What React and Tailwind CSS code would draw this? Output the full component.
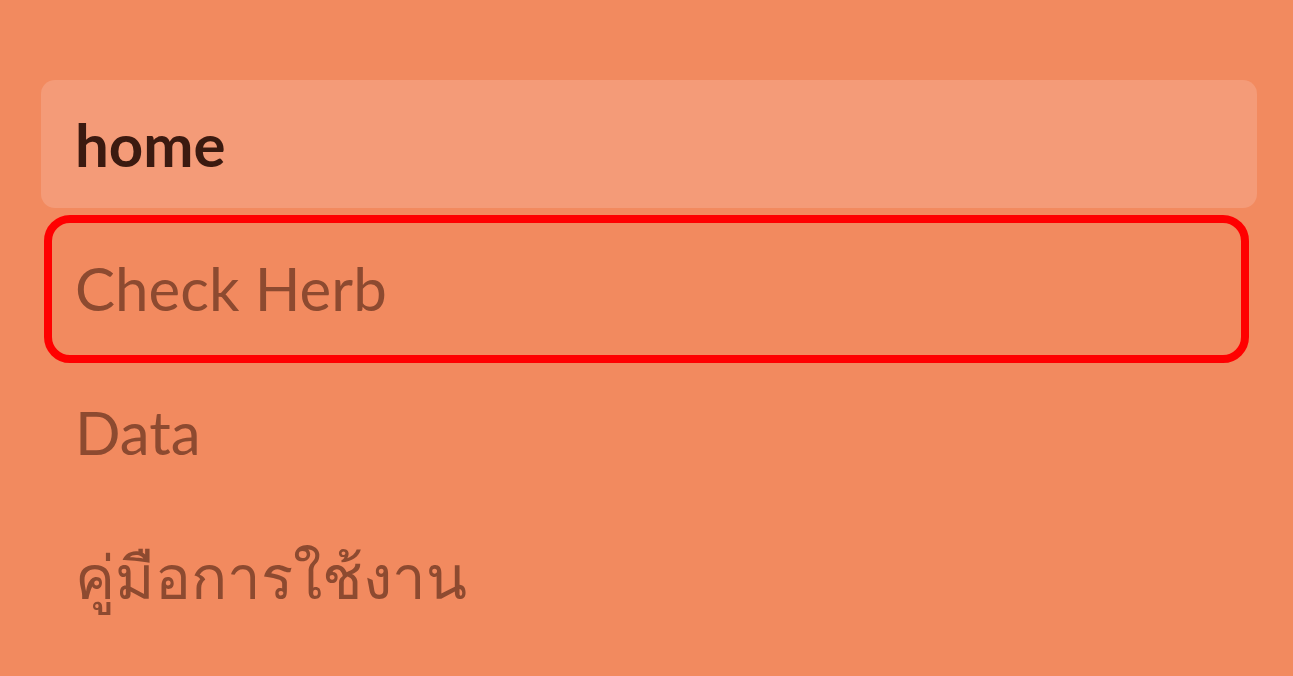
const items = [
  { label: "home", active: true },
  { label: "Check Herb", focused: true },
  { label: "Data" },
  { label: "คู่มือการใช้งาน" },
];

export default function App() {
  return (
    <div className="min-h-screen bg-[#f28a5f] pl-[41px] pr-[36px] pt-[80px] font-['Lato','Noto_Sans',sans-serif]">
      <nav className="flex flex-col gap-4">
        {items.map((item) => (
          <a
            key={item.label}
            href="#"
            className={
              "relative flex h-[128px] items-center rounded-[14px] pl-[34px] text-[60px] leading-none " +
              (item.active ? "bg-[#f49b78] font-bold text-[#3b1a10]" : "text-[#8d4a30]")
            }
          >
            {item.label}
            {item.focused && (
              <span className="pointer-events-none absolute -top-[9px] -bottom-[11px] left-[3px] right-[8px] rounded-[26px] border-[8px] border-[#ff0000]" />
            )}
          </a>
        ))}
      </nav>
    </div>
  );
}
